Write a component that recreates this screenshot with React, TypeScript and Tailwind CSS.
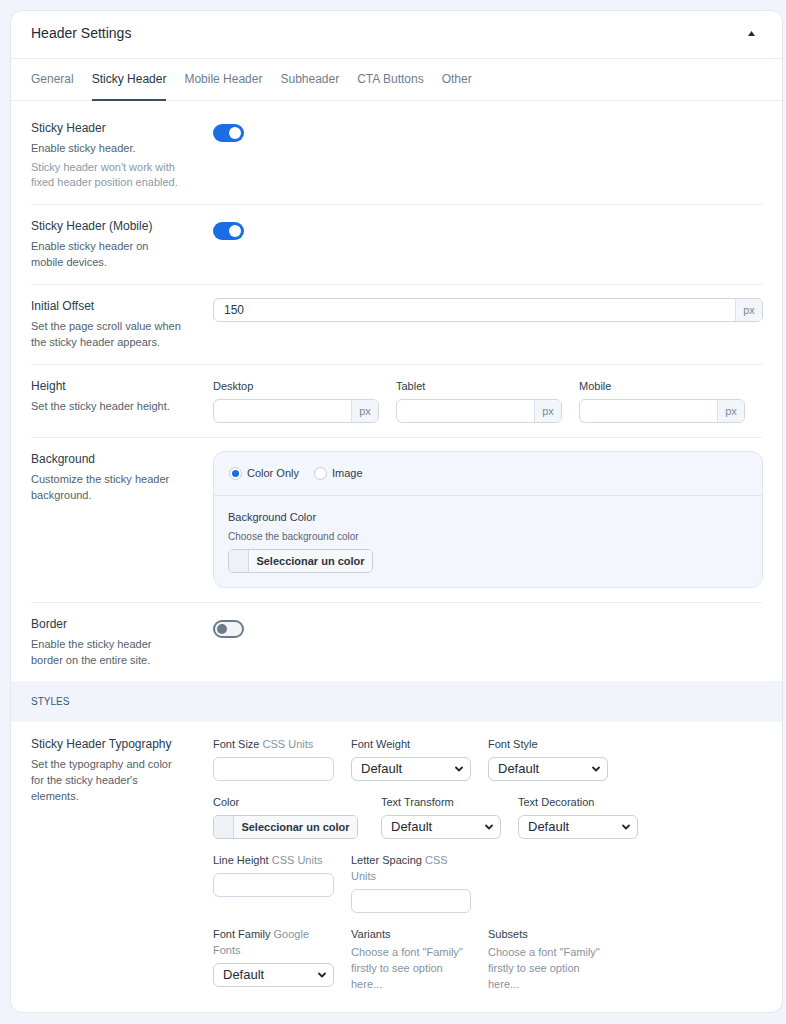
import type { ReactNode } from "react";

const tabs = ["General", "Sticky Header", "Mobile Header", "Subheader", "CTA Buttons", "Other"];

function Toggle({ on }: { on?: boolean }) {
  if (on) {
    return (
      <div className="w-[31px] h-[18px] rounded-full bg-[#1b6de6] flex items-center justify-end pr-[3px]">
        <div className="w-[12px] h-[12px] rounded-full bg-white" />
      </div>
    );
  }
  return (
    <div className="w-[31px] h-[18px] rounded-full border-2 border-[#6c7b89] bg-[#f2f4f6] flex items-center pl-[2px]">
      <div className="w-[10px] h-[10px] rounded-full bg-[#6c7b89]" />
    </div>
  );
}

function Row({
  label,
  desc,
  note,
  children,
  last,
}: {
  label: string;
  desc: string;
  note?: string;
  children?: ReactNode;
  last?: boolean;
}) {
  return (
    <div className={"flex pt-[13px] " + (last ? "pb-[13px]" : "pb-[14px] border-b border-[#e8edf3]")}>
      <div className="w-[182px] shrink-0">
        <div className="text-[12px] leading-[16px] text-[#2b3b4c]">{label}</div>
        <div className="max-w-[151px] mt-[4px] text-[11px] leading-[16px] text-[#525f6c]">{desc}</div>
        {note && (
          <div className="max-w-[151px] mt-[4px] text-[11px] leading-[15px] text-[#8b99a7]">{note}</div>
        )}
      </div>
      <div className="flex-1 min-w-0">{children}</div>
    </div>
  );
}

function PxInput({ value }: { value?: string }) {
  return (
    <div className="flex h-[24px] rounded-[6px] border border-[#cfd7e1] bg-white overflow-hidden">
      <div className="flex-1 flex items-center pl-[10px] text-[12px] text-[#2b3b4c]">{value}</div>
      <div className="w-[27px] flex items-center justify-center border-l border-[#dde3ea] bg-[#f2f5f9] text-[11px] text-[#7d8a97]">
        px
      </div>
    </div>
  );
}

function TextBox() {
  return <div className="h-[24px] rounded-[6px] border border-[#cfd7e1] bg-white" />;
}

function Select() {
  return (
    <div className="h-[24px] rounded-[6px] border border-[#c9d1db] bg-white flex items-center justify-between pl-[9px] pr-[7px]">
      <span className="text-[13px] text-[#1f2a36]">Default</span>
      <svg width="8" height="6" viewBox="0 0 8 6" fill="none">
        <path d="M1 1.5l3 3 3-3" stroke="#1f2a36" strokeWidth="1.8" strokeLinecap="round" strokeLinejoin="round" />
      </svg>
    </div>
  );
}

function ColorButton() {
  return (
    <div className="flex h-[24px] w-[145px] rounded-[5px] border border-[#c6ced8] overflow-hidden">
      <div className="w-[20px] bg-[#eef1f5] border-r border-[#d3d9e1]" />
      <div className="flex-1 flex items-center justify-center bg-[#f7f8fa] text-[11px] font-bold text-[#2b3440]">
        Seleccionar un color
      </div>
    </div>
  );
}

function Field({
  label,
  extra,
  width,
  children,
}: {
  label: string;
  extra?: string;
  width: string;
  children?: ReactNode;
}) {
  return (
    <div className={width}>
      <p className="text-[11px] leading-[16px] text-[#2f3e4d]">
        {label}
        {extra && <span className="text-[#8593a1]"> {extra}</span>}
      </p>
      <div className="mt-[5px]">{children}</div>
    </div>
  );
}

export default function App() {
  return (
    <div className="min-h-screen bg-[#f1f5fb] pt-[10px] pl-[10px] pb-[11px] font-['Liberation_Sans',Arial,sans-serif]">
      <div className="w-[773px] rounded-[12px] border border-[#e2e8ef] bg-white overflow-hidden">
        <div className="flex items-center justify-between pl-5 pr-[27px] pt-[12px] pb-[15px] border-b border-[#e8edf3]">
          <h2 className="text-[14px] leading-[20px] text-[#1e2b39]">Header Settings</h2>
          <svg width="7" height="5" viewBox="0 0 7 5">
            <path d="M3.5 0L7 5H0z" fill="#1e2b39" />
          </svg>
        </div>

        <div className="flex gap-[18px] px-5 border-b border-[#e8edf3]">
          {tabs.map((t) => (
            <div
              key={t}
              className={
                "pt-[12px] pb-[12px] -mb-px border-b-2 text-[12px] leading-[16px] " +
                (t === "Sticky Header" ? "border-[#3b4f63] text-[#253545]" : "border-transparent text-[#6e7d8c]")
              }
            >
              {t}
            </div>
          ))}
        </div>

        <div className="pl-5 pr-[19px] pt-[6px]">
          <Row
            label="Sticky Header"
            desc="Enable sticky header."
            note="Sticky header won't work with fixed header position enabled."
          >
            <div className="mt-[4px]">
              <Toggle on />
            </div>
          </Row>
          <Row label="Sticky Header (Mobile)" desc="Enable sticky header on mobile devices.">
            <div className="mt-[4px]">
              <Toggle on />
            </div>
          </Row>
          <Row label="Initial Offset" desc="Set the page scroll value when the sticky header appears.">
            <PxInput value="150" />
          </Row>
          <Row label="Height" desc="Set the sticky header height.">
            <div className="flex gap-[17px]">
              {["Desktop", "Tablet", "Mobile"].map((d) => (
                <Field key={d} label={d} width="w-[166px]">
                  <PxInput />
                </Field>
              ))}
            </div>
          </Row>
          <Row label="Background" desc="Customize the sticky header background.">
            <div className="rounded-[12px] border border-[#dfe5ee] bg-[#f3f6fc]">
              <div className="flex items-center h-[44px] pl-[15px] border-b border-[#dfe5ee] text-[11px] text-[#2f3e4d]">
                <div className="w-[13px] h-[13px] rounded-full border border-[#c5ccd6] bg-white flex items-center justify-center">
                  <div className="w-[7px] h-[7px] rounded-full bg-[#1b6de6]" />
                </div>
                <span className="ml-[5px]">Color Only</span>
                <div className="ml-[15px] w-[13px] h-[13px] rounded-full border border-[#c5ccd6] bg-white" />
                <span className="ml-[5px]">Image</span>
              </div>
              <div className="pl-[14px] pt-[13px] pb-[14px]">
                <div className="text-[11px] leading-[16px] text-[#2b3b4c]">Background Color</div>
                <div className="mt-[5px] text-[10px] leading-[14px] text-[#5a6774]">Choose the background color</div>
                <div className="mt-[5px]">
                  <ColorButton />
                </div>
              </div>
            </div>
          </Row>
          <Row label="Border" desc="Enable the sticky header border on the entire site." last>
            <div className="mt-[4px]">
              <Toggle />
            </div>
          </Row>
        </div>

        <div className="h-[41px] flex items-center pl-5 bg-[#f1f5fb] text-[10px] text-[#2c5a80] uppercase">
          Styles
        </div>

        <div className="pl-5 pr-[19px] pt-[14px] pb-[20px] flex">
          <div className="w-[182px] shrink-0">
            <div className="text-[12px] leading-[16px] text-[#2b3b4c]">Sticky Header Typography</div>
            <div className="max-w-[151px] mt-[4px] text-[11px] leading-[16px] text-[#525f6c]">
              Set the typography and color for the sticky header's elements.
            </div>
          </div>
          <div className="flex-1 flex flex-col gap-[13px]">
            <div className="flex gap-[17px] items-start">
              <Field label="Font Size" extra="CSS Units" width="w-[121px]">
                <TextBox />
              </Field>
              <Field label="Font Weight" width="w-[120px]">
                <Select />
              </Field>
              <Field label="Font Style" width="w-[120px]">
                <Select />
              </Field>
            </div>
            <div className="flex gap-[17px] items-start">
              <Field label="Color" width="w-[151px]">
                <ColorButton />
              </Field>
              <Field label="Text Transform" width="w-[120px]">
                <Select />
              </Field>
              <Field label="Text Decoration" width="w-[120px]">
                <Select />
              </Field>
            </div>
            <div className="flex gap-[17px] items-start">
              <Field label="Line Height" extra="CSS Units" width="w-[121px]">
                <TextBox />
              </Field>
              <Field label="Letter Spacing" extra="CSS Units" width="w-[120px]">
                <TextBox />
              </Field>
            </div>
            <div className="flex gap-[17px] items-start">
              <Field label="Font Family" extra="Google Fonts" width="w-[121px]">
                <Select />
              </Field>
              <div className="w-[120px]">
                <p className="text-[11px] leading-[16px] text-[#2f3e4d]">Variants</p>
                <p className="mt-[2px] text-[11px] leading-[16px] text-[#8593a1]">
                  Choose a font "Family" firstly to see option here...
                </p>
              </div>
              <div className="w-[120px]">
                <p className="text-[11px] leading-[16px] text-[#2f3e4d]">Subsets</p>
                <p className="mt-[2px] text-[11px] leading-[16px] text-[#8593a1]">
                  Choose a font "Family" firstly to see option here...
                </p>
              </div>
            </div>
          </div>
        </div>
      </div>
    </div>
  );
}
